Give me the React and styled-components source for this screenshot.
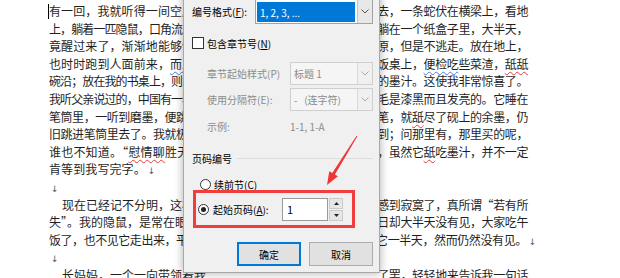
import React from "react"
import styled, { createGlobalStyle } from "styled-components"

const GlobalStyle = createGlobalStyle`
  html, body { margin: 0; padding: 0; background: #fff; }
  body { overflow: hidden; }
`

const Page = styled.div`
  position: relative;
  width: 620px;
  height: 278px;
  overflow: hidden;
  background: #fff;
  font-family: "Noto Sans CJK SC", "Noto Sans", sans-serif;
`

const Doc = styled.div`
  width: 479px;
  padding: 2px 0 0 49px;
  color: #1f1f1f;
  font-size: 12px;
`

const Line = styled.div`
  display: flex;
  justify-content: space-between;
  height: 17.6px;
  line-height: 17.6px;
  white-space: nowrap;
  padding-left: ${p => p.$indent || 0}px;
`

const Part = styled.span`
  letter-spacing: ${p => p.$ls || 0}px;
`

const Wavy = styled.span`
  text-decoration: underline wavy ${p => (p.$c === "blue" ? "#4a78d8" : "#e23a3a")};
  text-decoration-thickness: 1px;
  text-underline-offset: 2px;
  text-decoration-skip-ink: none;
`

const Para = styled.span`
  font-family: "DejaVu Sans", sans-serif;
  font-size: 9px;
  color: #555;
  margin-left: 2px;
  margin-right: ${p => (p.$hang ? -8 : 0)}px;
`

const Caret = styled.span`
  display: inline-block;
  width: 1px;
  height: 15px;
  background: #000;
  vertical-align: -3px;
  margin-left: -1px;
`

const rows = [
  { l: [{ caret: true }, "有一回，我就听得一间空屋"], ll: 0.1, r: ["进去，一条蛇伏在横梁上，看地"] },
  { l: ["上，躺着一匹隐鼠，口角流血"], ll: -0.9, r: ["给躺在一个纸盒子里，大半天，"] },
  { l: ["竟醒过来了，渐渐地能够饮食"], ll: 0.1, r: ["了原，但是不逃走。放在地上，"] },
  { l: ["也时时跑到人面前来，", { t: "而且", w: "blue" }], ll: 0.1, r: ["在饭桌上，", { t: "便检吃", w: "blue" }, "些菜渣，", { t: "舐舐", w: "red" }] },
  { l: ["碗沿；放在我的书桌上，则从"], ll: -0.9, r: ["着的墨汁。这使我非常惊喜了。"] },
  { l: ["我听父亲说过的，中国有一种"], ll: -0.9, r: ["的毛是漆黑而且发亮的。它睡在"] },
  { l: ["笔筒里，一听到磨墨，便跳出"], ll: -0.45, r: ["上笔，就", { t: "舐", w: "red" }, "尽了砚上的余墨，仍"] },
  { l: ["旧跳进笔筒里去了。我就极愿"], ll: -0.45, r: ["不到；问那里有，那里买的呢，"] },
  { l: ["谁也不知道。“", { t: "慰情聊", w: "red" }, "胜无”"], ll: 0.2, r: ["罢，虽然它", { t: "舐", w: "red" }, "吃墨汁，并不一定"] },
  { l: ["肯等到我写完字。", { para: true }], ll: 0.1 },
  { l: [{ para: true }] },
  { indent: 13, l: ["现在已经记不分明，这样的"], r: ["然感到寂寞了，真所谓“若有所"] },
  { l: ["失”。我的隐鼠，是常在眼前"], r: ["一日却大半天没有见，大家吃午"] },
  { l: ["饭了，也不见它走出来，平时"], ll: -0.45, r: ["等它一半天，然而仍然没有见。", { para: true, hang: true }] },
  { l: [{ para: true }] },
  { indent: 13, l: ["长妈妈，一个一向带领着我"], r: ["了罢，轻轻地来告诉我一句话"] },
]

const renderSegs = segs =>
  segs.map((s, i) => {
    if (typeof s === "string") return <React.Fragment key={i}>{s}</React.Fragment>
    if (s.caret) return <Caret key={i} />
    if (s.para) return <Para key={i} $hang={s.hang}>↓</Para>
    return <Wavy key={i} $c={s.w}>{s.t}</Wavy>
  })

/* dialog */

const Dialog = styled.div`
  position: absolute;
  left: 183px;
  top: -10px;
  width: 197px;
  height: 283px;
  box-sizing: border-box;
  background: #f0f0f0;
  border: 1px solid #a8a8a8;
  box-shadow: 0 0 9px rgba(0, 0, 0, 0.32);
  padding: 8px 6px 0 8px;
  font-size: 10px;
  color: #000;
  display: flex;
  flex-direction: column;
`

const FieldRow = styled.div`
  display: flex;
  align-items: center;
  height: ${p => p.$h}px;
  margin-top: ${p => p.$mt || 0}px;
  padding-left: ${p => p.$pl || 0}px;
  white-space: nowrap;
`

const Label = styled.span`
  width: ${p => (p.$w ? `${p.$w}px` : "auto")};
  flex: none;
  color: ${p => (p.$dis ? "#8b8b8b" : "#000")};
  margin-left: ${p => p.$ml || 0}px;
`

const Key = styled.span`
  text-decoration: underline;
  text-underline-offset: 1px;
`

const Select = styled.div`
  display: flex;
  width: ${p => p.$w}px;
  height: 100%;
  box-sizing: border-box;
  border: 1px solid ${p => (p.$dis ? "#cfcfcf" : "#a2a2a2")};
  background: ${p => (p.$dis ? "#f5f5f5" : "#fff")};
`

const SelectValue = styled.div`
  flex: 1;
  display: flex;
  align-items: center;
  padding-left: 3px;
  color: ${p => (p.$dis ? "#8b8b8b" : "#000")};
  ${p => p.$sel && `
    margin: 2px 2px 1px 1px;
    background: #0078d7;
    color: #fff;
  `}
`

const DropBtn = styled.div`
  width: 14px;
  flex: none;
  display: flex;
  align-items: center;
  justify-content: center;
  border-left: 1px solid ${p => (p.$dis ? "#d8d8d8" : "#c4c4c4")};
  background: ${p => (p.$dis ? "#f0f0f0" : "#e8e8e8")};
`

const Chevron = ({ dis }) => (
  <svg width="8" height="5" viewBox="0 0 8 5">
    <polyline points="0.5,0.5 4,4 7.5,0.5" fill="none" stroke={dis ? "#a8a8a8" : "#555"} strokeWidth="1" />
  </svg>
)

const Checkbox = styled.span`
  width: 12px;
  height: 12px;
  box-sizing: border-box;
  border: 1px solid #333;
  background: #fff;
  margin-right: 3px;
  flex: none;
`

const Radio = styled.span`
  width: 11px;
  height: 11px;
  box-sizing: border-box;
  border-radius: 50%;
  border: 1px solid #333;
  background: #fff;
  flex: none;
  display: flex;
  align-items: center;
  justify-content: center;
  &::after {
    content: "";
    width: 5px;
    height: 5px;
    border-radius: 50%;
    background: ${p => (p.$on ? "#222" : "transparent")};
  }
`

const GroupHead = styled.div`
  display: flex;
  align-items: center;
  height: 14px;
  margin-top: 18px;
`

const Rule = styled.div`
  flex: 1;
  height: 1px;
  margin-left: 5px;
  background: #dcdcdc;
`

const Marked = styled.div`
  display: flex;
  align-items: center;
  width: 162px;
  height: 38px;
  box-sizing: border-box;
  margin: -1px 0 0 1px;
  padding-left: 2px;
  border: 3px solid #f23d3d;
  white-space: nowrap;
`

const NumInput = styled.div`
  width: 46px;
  height: 23px;
  box-sizing: border-box;
  border: 1px solid #9a9a9a;
  background: #fff;
  display: flex;
  align-items: center;
  padding-left: 4px;
  font-size: 11px;
`

const Spin = styled.div`
  width: 14px;
  height: 23px;
  margin-left: 1px;
  display: flex;
  flex-direction: column;
  gap: 1px;
`

const SpinBtn = styled.div`
  flex: 1;
  display: flex;
  align-items: center;
  justify-content: center;
  background: #e6e6e6;
  border: 1px solid #cacaca;
`

const Buttons = styled.div`
  display: flex;
  justify-content: flex-end;
  gap: 8px;
  margin-top: 14px;
`

const Button = styled.div`
  width: 64px;
  height: 24px;
  box-sizing: border-box;
  display: flex;
  align-items: center;
  justify-content: center;
  background: #e1e1e1;
  border: ${p => (p.$primary ? "2px solid #0078d7" : "1px solid #adadad")};
`

const Overlay = styled.svg`
  position: absolute;
  left: 0;
  top: 0;
  pointer-events: none;
`

export default function App() {
  return (
    <Page>
      <GlobalStyle />
      <Doc>
        {rows.map((row, i) => (
          <Line key={i} $indent={row.indent}>
            <Part $ls={row.ll}>{renderSegs(row.l)}</Part>
            {row.r && <Part $ls={-0.4}>{renderSegs(row.r)}</Part>}
          </Line>
        ))}
      </Doc>

      <Dialog>
        <FieldRow $h={25}>
          <Label $w={63}>编号格式(<Key>F</Key>):</Label>
          <Select $w={118}>
            <SelectValue $sel>1, 2, 3, ...</SelectValue>
            <DropBtn><Chevron /></DropBtn>
          </Select>
        </FieldRow>

        <FieldRow $h={14} $mt={12}>
          <Checkbox />
          <Label>包含章节号(<Key>N</Key>)</Label>
        </FieldRow>

        <FieldRow $h={23} $mt={12} $pl={15}>
          <Label $w={83} $dis>章节起始样式(P)</Label>
          <Select $w={83} $dis>
            <SelectValue $dis>标题 1</SelectValue>
            <DropBtn $dis><Chevron dis /></DropBtn>
          </Select>
        </FieldRow>

        <FieldRow $h={23} $mt={3} $pl={15}>
          <Label $w={83} $dis>使用分隔符(E):</Label>
          <Select $w={83} $dis>
            <SelectValue $dis>-&nbsp;&nbsp;&nbsp;(连字符)</SelectValue>
            <DropBtn $dis><Chevron dis /></DropBtn>
          </Select>
        </FieldRow>

        <FieldRow $h={14} $mt={8} $pl={15}>
          <Label $w={83} $dis>示例:</Label>
          <Label $dis>1-1, 1-A</Label>
        </FieldRow>

        <GroupHead>
          <Label>页码编号</Label>
          <Rule />
        </GroupHead>

        <FieldRow $h={14} $mt={12} $pl={8}>
          <Radio />
          <Label $ml={3}>续前节(<Key>C</Key>)</Label>
        </FieldRow>

        <Marked>
          <Radio $on />
          <Label $w={69} $ml={4}>起始页码(<Key>A</Key>):</Label>
          <NumInput>1</NumInput>
          <Spin>
            <SpinBtn>
              <svg width="5" height="3" viewBox="0 0 5 3"><polygon points="2.5,0 5,3 0,3" fill="#222" /></svg>
            </SpinBtn>
            <SpinBtn>
              <svg width="5" height="3" viewBox="0 0 5 3"><polygon points="0,0 5,0 2.5,3" fill="#222" /></svg>
            </SpinBtn>
          </Spin>
        </Marked>

        <Buttons>
          <Button $primary>确定</Button>
          <Button>取消</Button>
        </Buttons>
      </Dialog>

      <Overlay width="620" height="278" viewBox="0 0 620 278">
        <polygon
          points="357.4,136.3 334.9,174.6 337.9,176.3 327,185 329.3,171.3 332.3,173 356.6,135.7"
          fill="#f03434"
        />
      </Overlay>
    </Page>
  )
}
